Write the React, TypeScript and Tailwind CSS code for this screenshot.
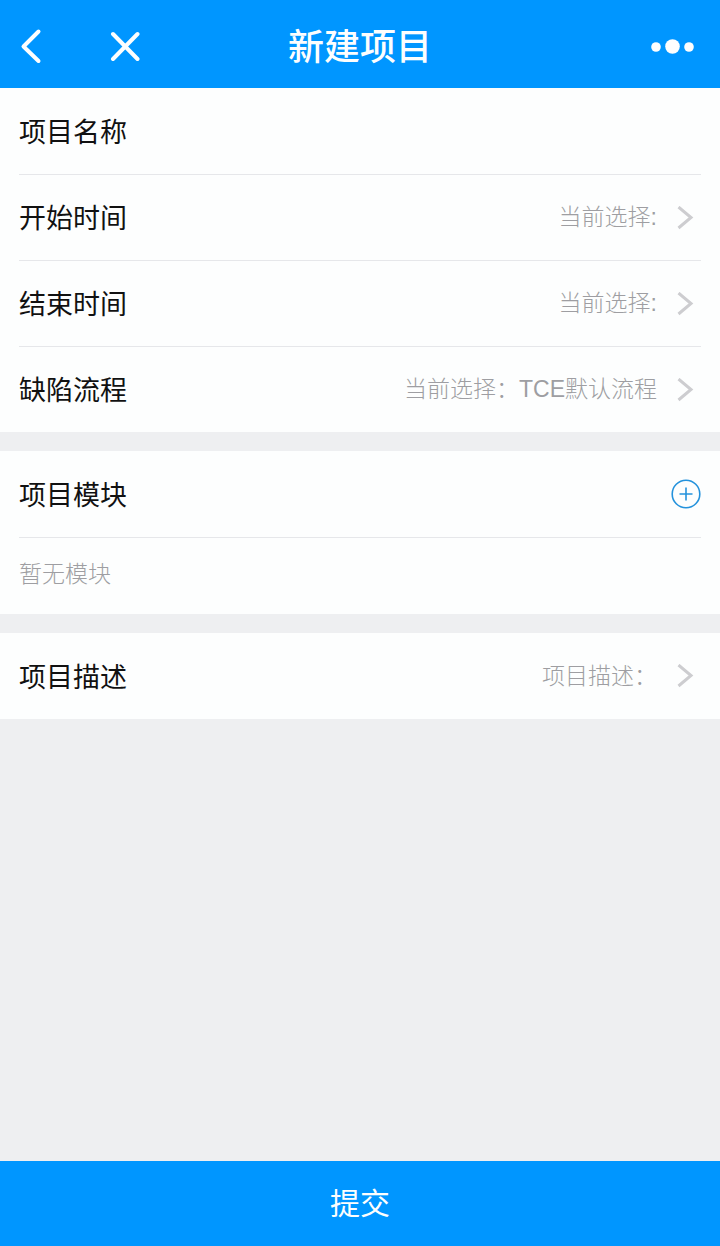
import type { ReactNode } from "react";

interface PickerRowProps {
  label: string;
  value: string;
  divided?: boolean;
}

function Chevron() {
  return (
    <svg
      width={24}
      height={24}
      viewBox="0 0 24 24"
      fill="none"
      stroke="#cdcdd0"
      strokeWidth={3}
      aria-hidden="true"
    >
      <path d="M1.5 1 L14 11.5 L1.5 22" />
    </svg>
  );
}

function Section({ children }: { children: ReactNode }) {
  return <section className="bg-[#fdfefe] px-[19px]">{children}</section>;
}

function PickerRow({ label, value, divided = false }: PickerRowProps) {
  return (
    <button
      type="button"
      className={`flex h-[86px] w-full items-center justify-between text-left ${
        divided ? "border-t border-[#e6e7ea]" : ""
      }`}
    >
      <span className="font-['Noto_Sans_CJK_SC',sans-serif] text-[27px] text-[#111111]">
        {label}
      </span>
      <span className="flex items-center gap-5 text-[23px] font-light text-[#9e9ea2]">
        {value}
        <Chevron />
      </span>
    </button>
  );
}

export default function App() {
  return (
    <div className="flex min-h-screen flex-col bg-[#eeeff1] font-['Liberation_Sans','Noto_Sans_CJK_SC',sans-serif]">
      <header className="grid h-[88px] grid-cols-[1fr_auto_1fr] items-center bg-[#0096ff] px-5 text-[#fdfefe]">
        <div className="flex items-center gap-[66px]">
          <button type="button" aria-label="返回">
            <svg
              width={24}
              height={40}
              viewBox="0 0 24 40"
              fill="none"
              stroke="currentColor"
              strokeWidth={4}
              strokeLinecap="round"
              strokeLinejoin="round"
            >
              <path d="M18.5 7.5 L3.5 22.5 L18.5 37" />
            </svg>
          </button>
          <button type="button" aria-label="关闭">
            <svg
              width={30}
              height={36}
              viewBox="0 0 30 36"
              fill="none"
              stroke="currentColor"
              strokeWidth={4}
              strokeLinecap="round"
            >
              <path d="M3 8 L27.5 33 M27.5 8 L3 33" />
            </svg>
          </button>
        </div>
        <h1 className="font-['Noto_Sans_CJK_SC',sans-serif] text-[36px] font-medium">
          新建项目
        </h1>
        <button type="button" aria-label="更多" className="justify-self-end">
          <svg width={50} height={20} viewBox="0 0 50 20" fill="currentColor">
            <circle cx={6} cy={13} r={4.8} />
            <circle cx={22.5} cy={12.5} r={7.3} />
            <circle cx={39} cy={13} r={4.8} />
          </svg>
        </button>
      </header>

      <main className="flex flex-1 flex-col gap-[19px]">
        <Section>
          <div className="flex h-[86px] items-center gap-5">
            <label
              htmlFor="project-name"
              className="font-['Noto_Sans_CJK_SC',sans-serif] text-[27px] text-[#111111]"
            >
              项目名称
            </label>
            <input
              id="project-name"
              type="text"
              className="min-w-0 flex-1 bg-transparent text-right text-[23px] outline-none"
            />
          </div>
          <PickerRow label="开始时间" value="当前选择:" divided />
          <PickerRow label="结束时间" value="当前选择:" divided />
          <PickerRow label="缺陷流程" value="当前选择：TCE默认流程" divided />
        </Section>

        <Section>
          <div className="flex h-[86px] items-center justify-between">
            <h2 className="font-['Noto_Sans_CJK_SC',sans-serif] text-[27px] text-[#111111]">
              项目模块
            </h2>
            <button type="button" aria-label="添加模块">
              <svg
                width={30}
                height={30}
                viewBox="0 0 30 30"
                fill="none"
                stroke="#2492dc"
                strokeWidth={1.6}
              >
                <circle cx={15} cy={15} r={13.8} />
                <path d="M8.5 15 H21.5 M15 8.5 V21.5" />
              </svg>
            </button>
          </div>
          <p className="border-t border-[#e6e7ea] pt-[19px] pb-[23px] text-[23px] leading-[34px] font-light text-[#9e9ea2]">
            暂无模块
          </p>
        </Section>

        <Section>
          <PickerRow label="项目描述" value="项目描述：" />
        </Section>
      </main>

      <button
        type="submit"
        className="h-[85px] w-full bg-[#0096ff] text-[30px] text-[#fdfefe]"
      >
        提交
      </button>
    </div>
  );
}
